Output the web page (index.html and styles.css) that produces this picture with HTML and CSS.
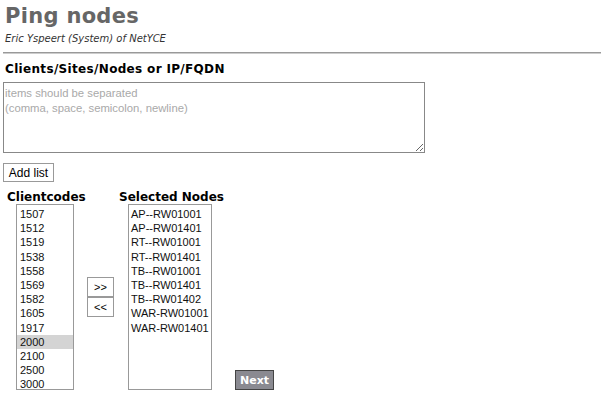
FILE: index.html
```html
<!DOCTYPE html>
<html>
<head>
<meta charset="utf-8">
<link rel="stylesheet" href="styles.css">
</head>
<body>
<div class="header">
  <h1 class="title">Ping nodes</h1>
  <div class="byline">Eric Yspeert (System) of NetYCE</div>
</div>
<div class="rule"></div>
<h2 class="section">Clients/Sites/Nodes or IP/FQDN</h2>
<textarea class="items" placeholder="items should be separated&#10;(comma, space, semicolon, newline)"></textarea>
<div class="addrow"><button class="btn add">Add list</button></div>
<div class="picker">
  <div class="label">Clientcodes</div>
  <div></div>
  <div class="label">Selected Nodes</div>
  <div></div>
  <div class="list codes">
    <div class="opt">1507</div>
    <div class="opt">1512</div>
    <div class="opt">1519</div>
    <div class="opt">1538</div>
    <div class="opt">1558</div>
    <div class="opt">1569</div>
    <div class="opt">1582</div>
    <div class="opt">1605</div>
    <div class="opt">1917</div>
    <div class="opt sel">2000</div>
    <div class="opt">2100</div>
    <div class="opt">2500</div>
    <div class="opt">3000</div>
  </div>
  <div class="moves">
    <button class="btn mv">&gt;&gt;</button>
    <button class="btn mv">&lt;&lt;</button>
  </div>
  <div class="list nodes">
    <div class="opt">AP--RW01001</div>
    <div class="opt">AP--RW01401</div>
    <div class="opt">RT--RW01001</div>
    <div class="opt">RT--RW01401</div>
    <div class="opt">TB--RW01001</div>
    <div class="opt">TB--RW01401</div>
    <div class="opt">TB--RW01402</div>
    <div class="opt">WAR-RW01001</div>
    <div class="opt">WAR-RW01401</div>
  </div>
  <div class="nextcell"><button class="next">Next</button></div>
</div>
</body>
</html>
```
FILE: styles.css
```css
html, body {
  margin: 0;
  padding: 0;
  background: #fff;
}
body {
  font-family: "DejaVu Sans", Verdana, sans-serif;
  color: #000;
}
.header {
  padding: 4px 0 0 5px;
}
.title {
  margin: 0;
  font-size: 21px;
  line-height: 24px;
  font-weight: bold;
  color: #666;
  letter-spacing: 0.3px;
}
.byline {
  font-size: 10px;
  line-height: 14px;
  font-style: italic;
  color: #333;
  margin-top: 4px;
}
.rule {
  margin: 6px 0 0 3px;
  height: 0;
  border-top: 1px solid #999;
  border-bottom: 1px solid #ccc;
}
.section {
  margin: 8px 0 0 5px;
  font-size: 12px;
  line-height: 14px;
  font-weight: bold;
  letter-spacing: 0.33px;
}
.items {
  display: block;
  box-sizing: border-box;
  margin: 6px 0 0 3px;
  width: 422px;
  height: 71px;
  border: 1px solid #888;
  padding: 3px 1px;
  font-family: "Liberation Sans", Arial, sans-serif;
  font-size: 11.3px;
  line-height: 15px;
  resize: both;
  outline: none;
}
.items::placeholder {
  color: #a9a9a9;
}
.addrow {
  display: flex;
  margin: 10px 0 0 3px;
}
.btn {
  box-sizing: border-box;
  background: #fff;
  border: 1px solid #999;
  font-family: "Liberation Sans", Arial, sans-serif;
  font-size: 12px;
  color: #000;
  padding: 0;
  margin: 0;
}
.add {
  width: 51px;
  height: 19px;
}
.picker {
  display: grid;
  grid-template-columns: 80px 32px 116px auto;
  margin: 8px 0 0 7px;
}
.label {
  font-size: 12px;
  line-height: 14px;
  font-weight: bold;
}
.list {
  box-sizing: border-box;
  height: 186px;
  border: 1px solid #999;
  padding-top: 2px;
  overflow: hidden;
  font-family: "Liberation Sans", Arial, sans-serif;
  font-size: 11px;
  color: #111;
}
.codes {
  margin-left: 9px;
  width: 58px;
}
.nodes {
  margin-left: 9px;
  width: 84px;
}
.opt {
  padding: 1px 2px 0 3px;
  line-height: 13.2px;
  white-space: nowrap;
}
.nodes .opt {
  padding-left: 2px;
}
.sel {
  background: #d4d4d4;
}
.moves {
  align-self: center;
  display: flex;
  flex-direction: column;
}
.mv {
  width: 27px;
  height: 20px;
  font-size: 11px;
}
.nextcell {
  align-self: end;
}
.next {
  box-sizing: border-box;
  width: 39px;
  height: 20px;
  background: #8a8a91;
  border: 1px solid #444;
  color: #fff;
  font-family: "DejaVu Sans", Verdana, sans-serif;
  font-weight: bold;
  font-size: 11px;
  padding: 0;
}
```
